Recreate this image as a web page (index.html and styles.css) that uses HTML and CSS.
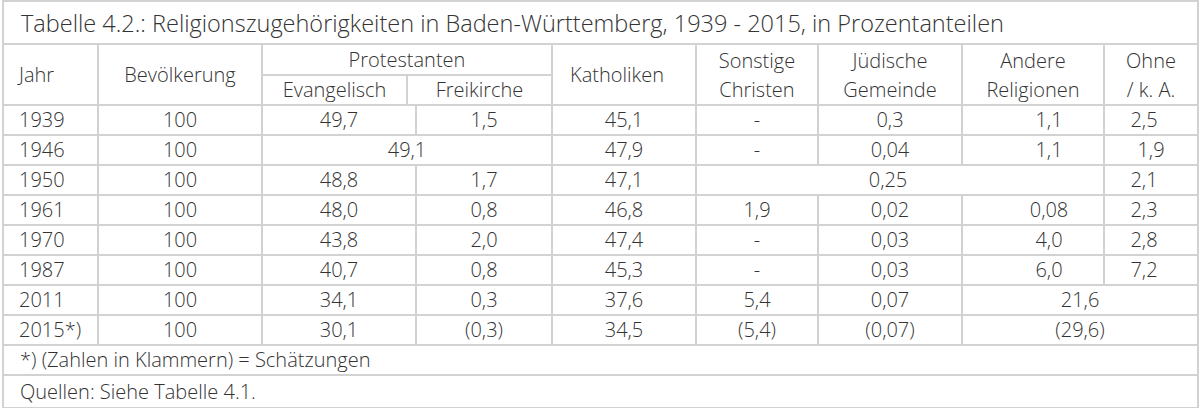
FILE: index.html
```html
<!DOCTYPE html>
<html lang="de">
<head>
<meta charset="utf-8">
<title>Tabelle 4.2</title>
<link rel="stylesheet" href="styles.css">
</head>
<body>
<table class="rel">
  <colgroup>
    <col class="c-jahr">
    <col class="c-bev">
    <col class="c-ev">
    <col class="c-gap">
    <col class="c-frei">
    <col class="c-kath">
    <col class="c-sonst">
    <col class="c-jued">
    <col class="c-and">
    <col class="c-ohne">
  </colgroup>
  <thead>
    <tr class="r-title"><th colspan="10" class="title">Tabelle 4.2.: Religionszugehörigkeiten in Baden-Württemberg, 1939 - 2015, in Prozentanteilen</th></tr>
    <tr class="r-h1">
      <th rowspan="2" class="left">Jahr</th>
      <th rowspan="2">Bevölkerung</th>
      <th colspan="3">Protestanten</th>
      <th rowspan="2" class="kath">Katholiken</th>
      <th rowspan="2" class="two">Sonstige<br>Christen</th>
      <th rowspan="2" class="two">Jüdische<br>Gemeinde</th>
      <th rowspan="2" class="two">Andere<br>Religionen</th>
      <th rowspan="2" class="two">Ohne<br>/ k. A.</th>
    </tr>
    <tr class="r-h2">
      <th>Evangelisch</th>
      <th colspan="2">Freikirche</th>
    </tr>
  </thead>
  <tbody>
    <tr><td class="left">1939</td><td>100</td><td colspan="2">49,7</td><td class="fk">1,5</td><td>45,1</td><td>-</td><td>0,3</td><td class="and">1,1</td><td class="oh">2,5</td></tr>
    <tr><td class="left">1946</td><td>100</td><td colspan="3">49,1</td><td>47,9</td><td>-</td><td>0,04</td><td class="and">1,1</td><td>1,9</td></tr>
    <tr><td class="left">1950</td><td>100</td><td colspan="2">48,8</td><td class="fk">1,7</td><td>47,1</td><td colspan="3" class="span3">0,25</td><td class="oh">2,1</td></tr>
    <tr><td class="left">1961</td><td>100</td><td colspan="2">48,0</td><td class="fk">0,8</td><td>46,8</td><td>1,9</td><td>0,02</td><td class="and">0,08</td><td class="oh">2,3</td></tr>
    <tr><td class="left">1970</td><td>100</td><td colspan="2">43,8</td><td class="fk">2,0</td><td>47,4</td><td>-</td><td>0,03</td><td class="and">4,0</td><td class="oh">2,8</td></tr>
    <tr><td class="left">1987</td><td>100</td><td colspan="2">40,7</td><td class="fk">0,8</td><td>45,3</td><td>-</td><td>0,03</td><td class="and">6,0</td><td class="oh">7,2</td></tr>
    <tr><td class="left">2011</td><td>100</td><td colspan="2">34,1</td><td class="fk">0,3</td><td>37,6</td><td>5,4</td><td>0,07</td><td colspan="2">21,6</td></tr>
    <tr><td class="left">2015*)</td><td>100</td><td colspan="2">30,1</td><td class="fk">(0,3)</td><td>34,5</td><td>(5,4)</td><td>(0,07)</td><td colspan="2">(29,6)</td></tr>
  </tbody>
  <tfoot>
    <tr class="r-note"><td colspan="10" class="note">*) (Zahlen in Klammern) = Schätzungen</td></tr>
    <tr class="r-src"><td colspan="10" class="note">Quellen: Siehe Tabelle 4.1.</td></tr>
  </tfoot>
</table>
</body>
</html>
```

FILE: styles.css
```css
html, body {
  margin: 0;
  padding: 0;
  background: #ffffff;
}

body {
  font-family: "Open Sans", "Liberation Sans", sans-serif;
  font-weight: 300;
  color: #333333;
}

.rel {
  border-collapse: collapse;
  table-layout: fixed;
  width: 1195px;
  margin-left: 2px;
  font-size: 20px;
}

.c-jahr  { width: 95px; }
.c-bev   { width: 164px; }
.c-ev    { width: 145px; }
.c-gap   { width: 9px; }
.c-frei  { width: 136px; }
.c-kath  { width: 144px; }
.c-sonst { width: 122px; }
.c-jued  { width: 144px; }
.c-and   { width: 142px; }
.c-ohne  { width: 94px; }

.rel th,
.rel td {
  border: 2px solid #d2d2d2;
  padding: 0;
  text-align: center;
  vertical-align: middle;
  font-weight: 300;
  line-height: 28px;
  white-space: nowrap;
  overflow: hidden;
}

.rel .left {
  text-align: left;
  padding-left: 15px;
}

.rel .title {
  text-align: left;
  font-size: 23.5px;
  padding-left: 17px;
  height: 41px;
}

.rel .two { line-height: 29px; }
.rel .kath { padding-right: 14px; }

.r-h1 th { height: 29px; }
.r-h2 th { height: 28px; }
.rel tbody td { height: 28px; }

.rel .and { padding-left: 32px; }
.rel .oh { padding-right: 14px; }
.rel .span3 { padding-right: 24px; }

.rel .note {
  text-align: left;
  padding-left: 16px;
}

.r-note td { height: 26px; }
.r-src td { height: 31px; }
```
